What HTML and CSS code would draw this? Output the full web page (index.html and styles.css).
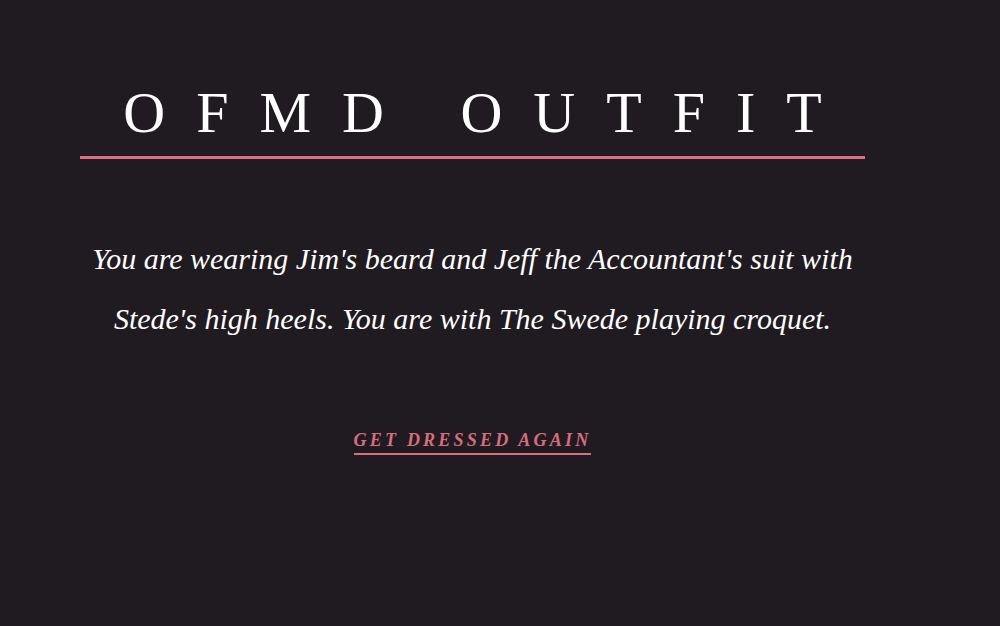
FILE: index.html
```html
<!DOCTYPE html>
<html lang="en">
<head>
  <meta charset="UTF-8" />
  <meta name="viewport" content="width=device-width, initial-scale=1.0" />
  <title>OFMD Outfit</title>
  <link rel="stylesheet" href="styles.css">
</head>
<body>

  <div class="result">
    <h1 class="title">OFMD OUTFIT</h1>

    <p class="outfit">
      You are wearing Jim's beard and Jeff the Accountant's suit with<br>
      Stede's high heels. You are with The Swede playing croquet.
    </p>

    <div class="again">
      <a href="#" class="again-link">Get dressed again</a>
    </div>
  </div>

</body>
</html>
```

FILE: styles.css
```css
* {
  margin: 0;
  padding: 0;
  box-sizing: border-box;
}

html, body {
  height: 100%;
  width: 100%;
  background-color: #1f1b20;
  color: #fff;
  font-family: 'Liberation Serif', 'Times New Roman', serif;
  overflow: hidden;
}

.result {
  width: 785px;
  margin-left: 80px;
  padding-top: 78px;
  display: flex;
  flex-direction: column;
  align-items: center;
}

.title {
  width: 100%;
  font-weight: 400;
  font-size: 58px;
  line-height: 70px;
  letter-spacing: 31px;
  text-indent: 31px;
  text-align: center;
  border-bottom: 3px solid #d96c7e;
  padding-bottom: 8px;
}

.outfit {
  margin-top: 70px;
  font-style: italic;
  font-size: 30px;
  line-height: 60px;
  text-align: center;
}

.again {
  margin-top: 81px;
}

.again-link {
  display: inline-block;
  color: #d96c7e;
  font-style: italic;
  font-weight: 700;
  font-size: 18px;
  letter-spacing: 3.2px;
  text-transform: uppercase;
  text-decoration: none;
  border-bottom: 2px solid #d96c7e;
  padding-bottom: 2px;
}
```
